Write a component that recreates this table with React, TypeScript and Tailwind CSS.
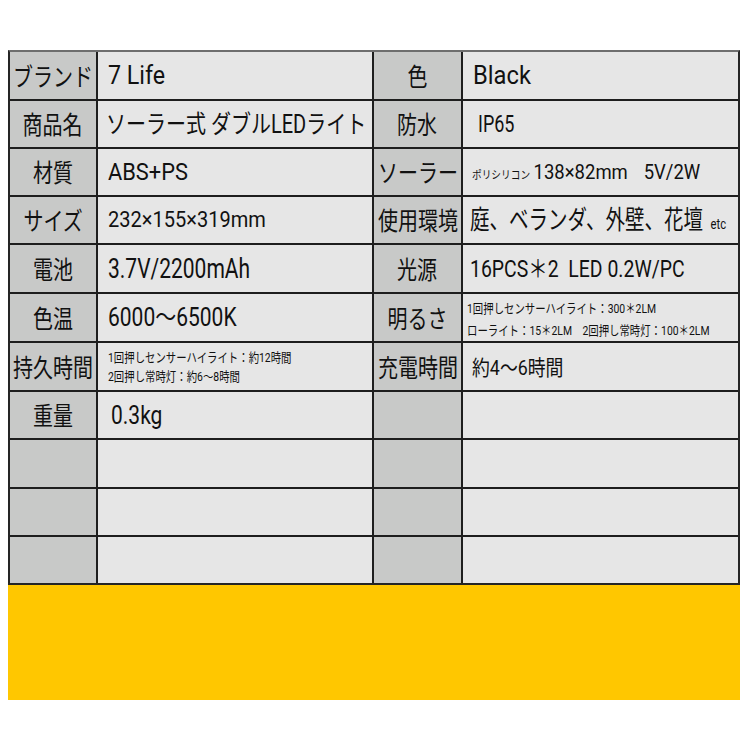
import type { ReactNode } from "react";

const font = { fontFamily: "Roboto, 'Noto Sans CJK JP', sans-serif" };

function Label({ children }: { children: ReactNode }) {
  return (
    <div className="flex items-center justify-center overflow-hidden bg-[#c8c9c8] pt-[3px]">
      <span className="inline-block whitespace-nowrap text-[25px] leading-none text-[#111] scale-x-[0.8]">
        {children}
      </span>
    </div>
  );
}

function Value({ children, className = "pl-[10px]" }: { children?: ReactNode; className?: string }) {
  return <div className={`flex items-center overflow-hidden bg-[#e6e6e6] text-[#111] ${className}`}>{children}</div>;
}

export default function App() {
  return (
    <div className="h-[750px] w-[750px] bg-white pt-[50px]" style={font}>
      {/* spec table */}
      <div className="ml-[8px] grid w-[732px] grid-cols-[86px_274px_87px_275px] grid-rows-[47px_46px_46px_46px_47px_47px_47px_46px_47px_46px_46px] gap-[2px] border-2 border-[#252525] border-t-[#6e6e6e] bg-[#1e1e1e]">
        <Label>ブランド</Label>
        <Value>
          <span className="inline-block origin-left whitespace-nowrap text-[25px] leading-none scale-x-[0.93]">7 Life</span>
        </Value>
        <Label>色</Label>
        <Value className="pl-[10px]">
          <span className="inline-block origin-left whitespace-nowrap text-[25px] leading-none scale-x-[0.95]">Black</span>
        </Value>

        <Label>商品名</Label>
        <Value className="pl-[8px]">
          <span className="inline-block origin-left whitespace-nowrap text-[25px] leading-none scale-x-[0.8]">ソーラー式 ダブルLEDライト</span>
        </Value>
        <Label>防水</Label>
        <Value className="pl-[15px]">
          <span className="inline-block origin-left whitespace-nowrap text-[24px] leading-none scale-x-[0.75]">IP65</span>
        </Value>

        <Label>材質</Label>
        <Value>
          <span className="inline-block origin-left whitespace-nowrap text-[24px] leading-none scale-x-[0.91]">ABS+PS</span>
        </Value>
        <Label>ソーラー</Label>
        <Value className="pl-[9px]">
          <span className="inline-block origin-left whitespace-nowrap leading-none scale-x-[0.88]">
            <span className="text-[11px]">ポリシリコン</span>
            <span className="ml-[4px] text-[21px]">138×82mm</span>
            <span className="ml-[18px] text-[21px]">5V/2W</span>
          </span>
        </Value>

        <Label>サイズ</Label>
        <Value>
          <span className="inline-block origin-left whitespace-nowrap text-[22px] leading-none scale-x-[0.91]">232×155×319mm</span>
        </Value>
        <Label>使用環境</Label>
        <Value className="pl-[7px]">
          <span className="inline-block origin-left whitespace-nowrap leading-none scale-x-[0.75]">
            <span className="text-[26px]">庭、ベランダ、外壁、花壇</span>
            <span className="ml-[10px] text-[15px]">etc</span>
          </span>
        </Value>

        <Label>電池</Label>
        <Value>
          <span className="inline-block origin-left whitespace-nowrap text-[28px] leading-none scale-x-[0.75]">3.7V/2200mAh</span>
        </Value>
        <Label>光源</Label>
        <Value className="pl-[7px]">
          <span className="inline-block origin-left whitespace-nowrap text-[24px] leading-none scale-x-[0.81]">16PCS＊2&nbsp;&nbsp;LED 0.2W/PC</span>
        </Value>

        <Label>色温</Label>
        <Value>
          <span className="inline-block origin-left whitespace-nowrap text-[25px] leading-none scale-x-[0.84]">6000〜6500K</span>
        </Value>
        <Label>明るさ</Label>
        <Value className="pl-[4px] pt-[4px]">
          <div className="origin-left scale-x-[0.8] whitespace-nowrap text-[13px] leading-[22px]">
            <div>1回押しセンサーハイライト：300＊2LM</div>
            <div>ローライト：15＊2LM　2回押し常時灯：100＊2LM</div>
          </div>
        </Value>

        <Label>持久時間</Label>
        <Value className="pl-[10px]">
          <div className="origin-left scale-x-[0.8] whitespace-nowrap text-[13px] leading-[19px]">
            <div>1回押しセンサーハイライト：約12時間</div>
            <div>2回押し常時灯：約6〜8時間</div>
          </div>
        </Value>
        <Label>充電時間</Label>
        <Value className="pl-[9px] pt-[3px]">
          <span className="inline-block origin-left whitespace-nowrap text-[21px] leading-none scale-x-[0.85]">約4〜6時間</span>
        </Value>

        <Label>重量</Label>
        <Value className="pl-[13px]">
          <span className="inline-block origin-left whitespace-nowrap text-[25px] leading-none scale-x-[0.84]">0.3kg</span>
        </Value>
        <Label>{""}</Label>
        <Value />

        <Label>{""}</Label>
        <Value />
        <Label>{""}</Label>
        <Value />

        <Label>{""}</Label>
        <Value />
        <Label>{""}</Label>
        <Value />

        <Label>{""}</Label>
        <Value />
        <Label>{""}</Label>
        <Value />
      </div>

      {/* yellow band */}
      <div className="ml-[8px] h-[115px] w-[732px] bg-[#ffc700]" />
    </div>
  );
}
